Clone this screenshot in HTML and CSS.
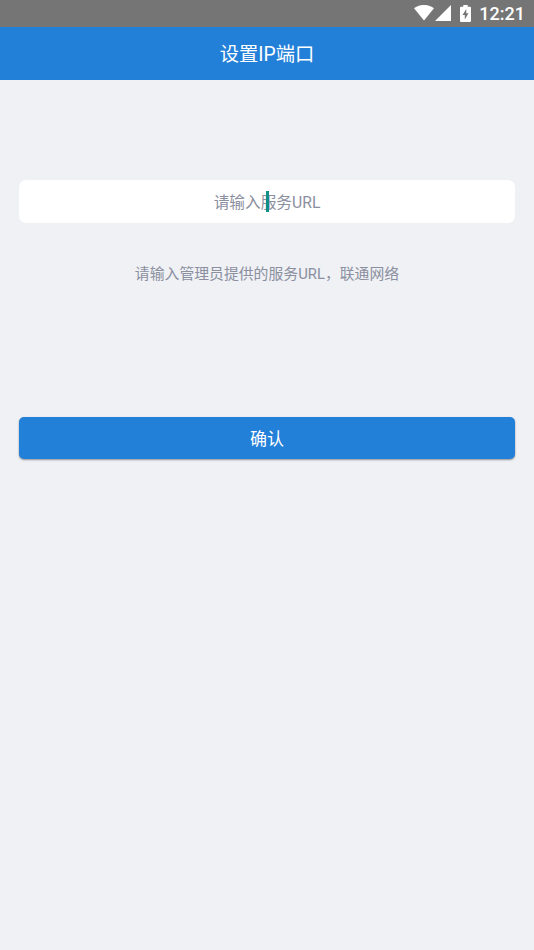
FILE: index.html
```html
<!DOCTYPE html>
<html lang="zh-CN">
<head>
<meta charset="utf-8">
<title>设置IP端口</title>
<link rel="stylesheet" href="styles.css">
</head>
<body>
<div class="status">
  <svg class="wifi" width="20" height="16" viewBox="0 0 20 16"><path d="M0 3.2C5.5-1.1 14.500-1.100 20 3.200L10 15.600Z"/></svg>
  <svg class="signal" width="16" height="16" viewBox="0 0 16 16"><path d="M0 16L16 0V16Z"/></svg>
  <svg class="battery" width="11" height="17" viewBox="0 0 11 17"><path fill-rule="evenodd" d="M3.300 0H7.700V1.700H10Q11 1.700 11 2.700V16Q11 17 10 17H1Q0 17 0 16V2.700Q0 1.700 1 1.700H3.300ZM6.300 4L2.500 10H4.800V14.500L8.500 8.300H6.300Z"/></svg>
  <span class="time">12:21</span>
</div>
<header class="bar">设置IP端口</header>
<main class="content">
  <div class="field"><span class="placeholder">请输入服务URL</span><i class="caret"></i></div>
  <p class="hint">请输入管理员提供的服务URL，联通网络</p>
  <button class="confirm">确认</button>
</main>
</body>
</html>
```
FILE: styles.css
```css
* { box-sizing: border-box; }
body {
  margin: 0;
  min-height: 950px;
  background: #eff1f5;
  font-family: Roboto, "Noto Sans CJK SC", sans-serif;
}
.status {
  height: 27px;
  background: #757575;
  display: flex;
  align-items: center;
  justify-content: flex-end;
  padding-right: 9px;
  color: #fff;
}
.status svg { fill: #fff; margin-top: -1px; }
.status .wifi { margin-right: 1px; }
.status .signal { margin-right: 9px; }
.status .battery { margin-right: 8px; }
.time { font-size: 18px; font-weight: 500; line-height: 27px; }
.bar {
  height: 53px;
  background: #2380d8;
  color: #fff;
  font-size: 19.300px;
  line-height: 55px;
  text-align: center;
}
.content { padding: 100px 19px 0; }
.field {
  position: relative;
  height: 42.500px;
  border-radius: 7px;
  background: #fff;
  color: #8b8f9f;
  font-size: 15.700px;
  line-height: 46px;
  text-align: center;
}
.caret {
  position: absolute;
  left: 247px;
  top: 11px;
  width: 2.500px;
  height: 21px;
  background: #118f88;
}
.hint {
  margin: 40.500px 0 0;
  height: 22px;
  color: #8b8f9f;
  font-size: 14.850px;
  line-height: 22px;
  text-align: center;
}
.confirm {
  display: block;
  width: 100%;
  height: 42px;
  margin: 132px 0 0;
  padding: 2px 0 0;
  border: 0;
  border-radius: 5px;
  background: #2380d8;
  box-shadow: 0 1px 2px rgba(0, 0, 0, .4);
  color: #fff;
  font-family: inherit;
  font-size: 17px;
  line-height: 40px;
}
```
